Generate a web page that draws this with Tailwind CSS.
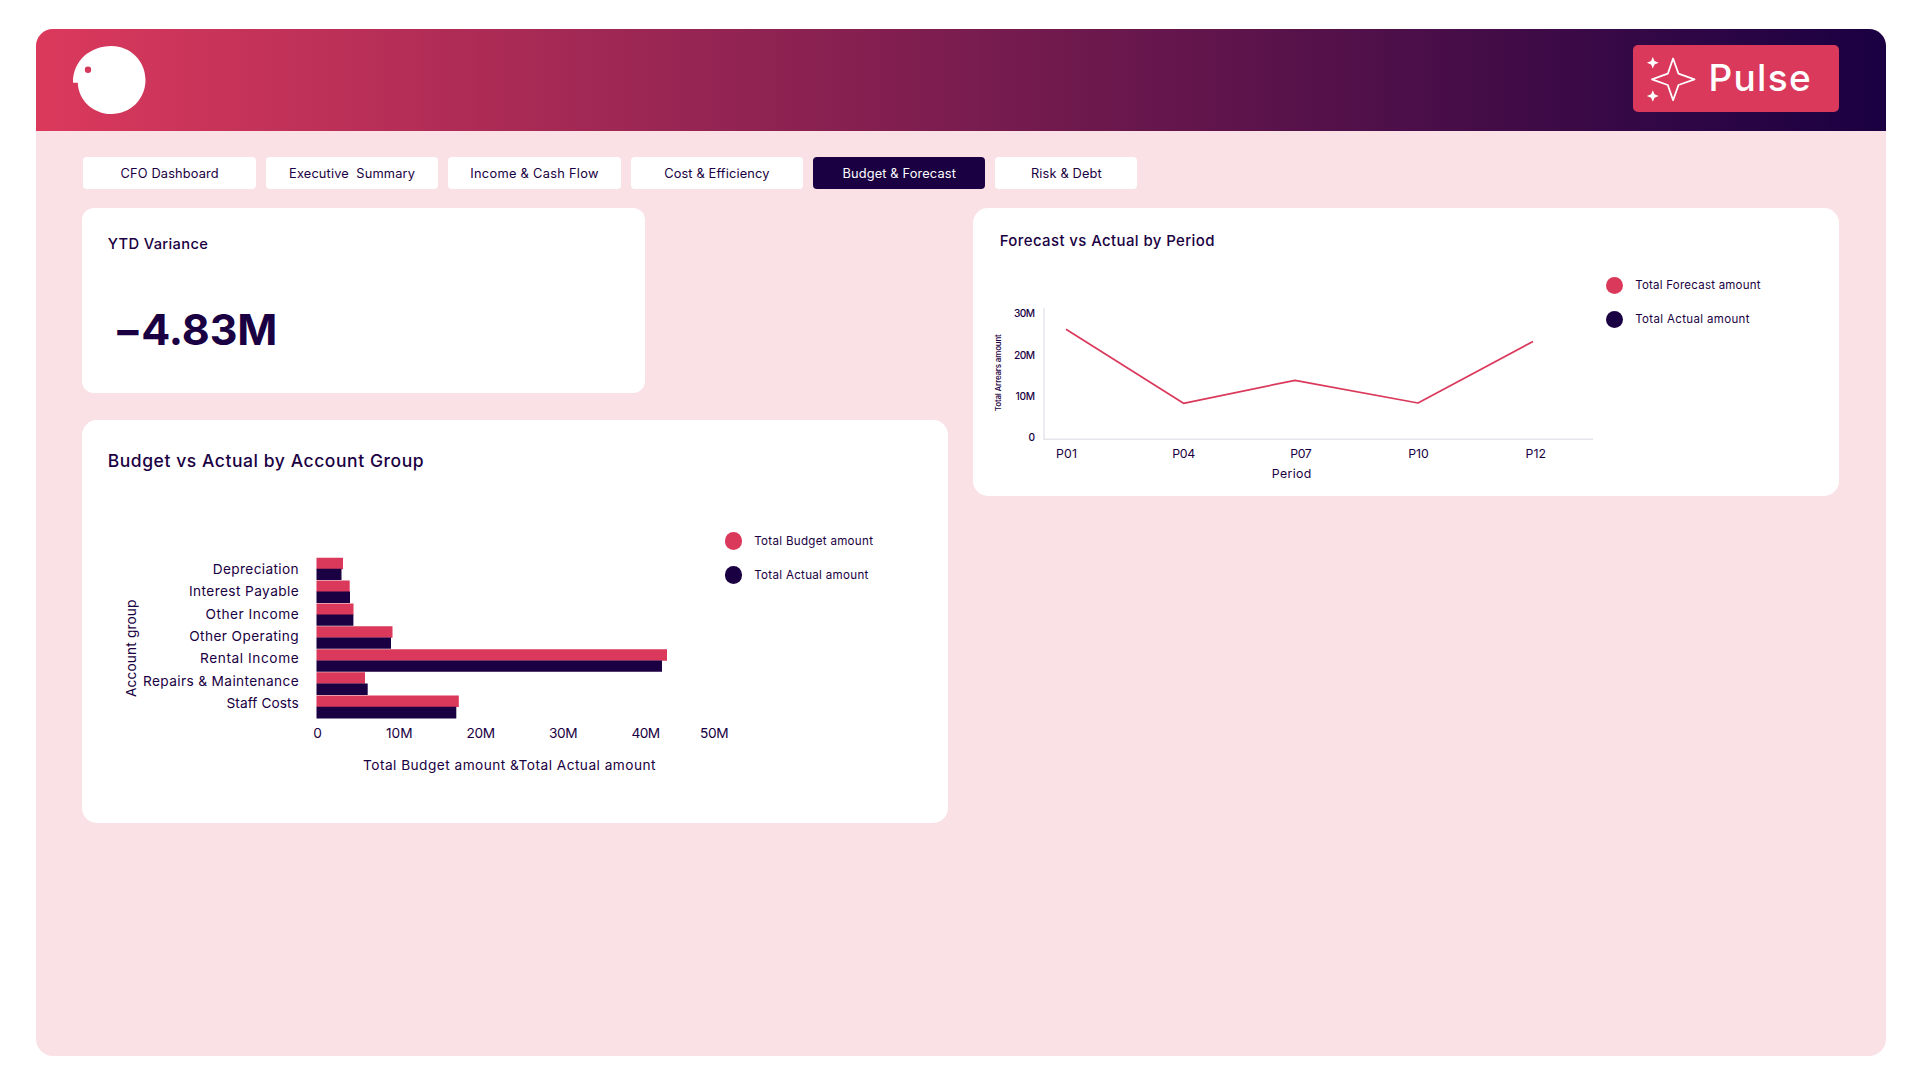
<!DOCTYPE html>
<html lang="en">
<head>
<meta charset="utf-8">
<title>Budget &amp; Forecast</title>
<script src="https://cdn.jsdelivr.net/npm/@tailwindcss/browser@4"></script>
</head>
<body class="h-[1081px] overflow-hidden bg-white pt-[28.5px] pl-[35.700px] font-['Inter',sans-serif] text-[#1a0042]">
<div class="h-[1027.5px] w-[1850.300px] overflow-hidden rounded-[17px] bg-[#fae1e6]">
  <header class="flex h-[102.5px] items-start justify-between bg-linear-to-r/srgb from-[#db395c] to-[#1a0042] pt-[16.5px] pr-[47px] pl-[37px]">
    <svg class="h-[70px] w-[74px]" viewBox="73 45 74 70">
      <path fill="#fff" d="M73 82.7C72.6 62 89 46 111.5 46C130.500 46 145.500 61 145.500 80S130.500 114 111.500 114C93 114 78.200 100 77.800 82.700Z"/>
      <circle cx="88" cy="69.800" r="3.200" fill="#d5385b"/>
    </svg>
    <div class="flex h-[67px] w-[205.500px] items-center rounded-[5px] bg-[#da395b]">
      <svg class="h-[67px] w-[77px] shrink-0" viewBox="1633.5 45 77 67">
        <path fill="none" stroke="#fff" stroke-width="1.800" stroke-linejoin="round" d="M1673.600 58.500L1679 73.700L1695 79.400L1679 85L1673.600 100.200L1668.300 85L1652.500 79.400L1668.300 73.700Z"/>
        <path fill="#fff" d="M1653.300 57L1655 61.100L1659.200 62.800L1655 64.500L1653.300 68.600L1651.600 64.500L1647.400 62.800L1651.600 61.100ZM1653.300 90.200L1655 94.300L1659.200 96L1655 97.700L1653.300 101.800L1651.600 97.700L1647.400 96L1651.600 94.300Z"/>
      </svg>
      <span class="-mt-0.5 -ml-0.5 text-[37px] font-medium tracking-[1.300px] text-white">Pulse</span>
    </div>
  </header>

  <nav class="mt-[26px] ml-[47.800px] flex gap-[10px] text-[12.800px] tracking-[0.150px]">
    <div class="flex h-[31.500px] w-[172.400px] items-center justify-center rounded-[4px] bg-white pt-px">CFO Dashboard</div>
    <div class="flex h-[31.500px] w-[172.400px] items-center justify-center whitespace-pre rounded-[4px] bg-white pt-px">Executive  Summary</div>
    <div class="flex h-[31.500px] w-[172.400px] items-center justify-center rounded-[4px] bg-white pt-px tracking-[0.300px]">Income &amp; Cash Flow</div>
    <div class="flex h-[31.500px] w-[172.400px] items-center justify-center rounded-[4px] bg-white pt-px">Cost &amp; Efficiency</div>
    <div class="flex h-[31.500px] w-[172.400px] items-center justify-center rounded-[4px] bg-[#1a0042] pt-px text-white">Budget &amp; Forecast</div>
    <div class="flex h-[31.500px] w-[142px] items-center justify-center rounded-[4px] bg-white pt-px">Risk &amp; Debt</div>
  </nav>

  <main class="mt-[19.800px] ml-[46px] flex items-start gap-[24.500px]">
    <div class="flex w-[866.500px] flex-col gap-[27px]">
      <section class="h-[184.500px] w-[563px] rounded-[12px] bg-white px-[26px] pt-[26px]">
        <h2 class="text-[14.700px] leading-5 font-medium tracking-[0.350px]">YTD Variance</h2>
        <p class="mt-[44.700px] ml-[9.500px] flex items-center text-[43px] leading-[60px] font-bold"><span class="-ml-1 w-[28px] overflow-visible">−</span><span class="tracking-[-0.100px]">4.83M</span></p>
      </section>

      <section class="h-[403px] rounded-[15px] bg-white px-[26px] pt-[29.200px]">
        <h2 class="text-[17.500px] leading-6 font-medium tracking-[0.560px]">Budget vs Actual by Account Group</h2>
        <div class="mt-[57px] flex">
          <svg class="h-[260px] w-[617px] shrink-0 overflow-visible" viewBox="108 530 617 260">
            <g fill="#da395b">
              <path d="M316.500 557.700H343v11.500H316.500ZM316.500 580.600H349.700v11.500H316.500ZM316.500 603.500H353.500v11.500H316.500ZM316.500 626.300H392.500v11.500H316.500ZM316.500 649.300H667v11.500H316.500ZM316.500 672.300H365v11.500H316.500ZM316.500 695.400H458.800v11.500H316.500Z"/>
            </g>
            <g fill="#1a0042">
              <path d="M316.500 568.700H341.500V580H316.500ZM316.500 591.600H350V603H316.500ZM316.500 614.500H353.400V625.800H316.500ZM316.500 637.400H391V648.800H316.500ZM316.500 660.400H662V671.800H316.500ZM316.500 683.500H367.700V694.900H316.500ZM316.500 706.700H456.300V718.500H316.500Z"/>
            </g>
            <g fill="#1a0042" font-size="13.700">
              <text x="212.700" y="574.300" textLength="86">Depreciation</text>
              <text x="189" y="596.400" textLength="109.700">Interest Payable</text>
              <text x="205.500" y="619" textLength="93.200">Other Income</text>
              <text x="189.200" y="641.300" textLength="109.500">Other Operating</text>
              <text x="200" y="663.400" textLength="98.700">Rental Income</text>
              <text x="143" y="686.200" textLength="155.700">Repairs &amp; Maintenance</text>
              <text x="226.500" y="708.300" textLength="72.200">Staff Costs</text>
              <text x="313.200" y="738.300" textLength="8">0</text>
              <text x="386" y="738.300" textLength="26.500">10M</text>
              <text x="466.500" y="738.300" textLength="28.500">20M</text>
              <text x="549" y="738.300" textLength="28.500">30M</text>
              <text x="631.500" y="738.300" textLength="28.500">40M</text>
              <text x="700" y="738.300" textLength="28.500">50M</text>
              <text x="363" y="770.300" textLength="292.500">Total Budget amount &amp;Total Actual amount</text>
              <text transform="translate(135.700 697) rotate(-90)" textLength="97.500">Account group</text>
            </g>
          </svg>
          <div class="flex flex-col gap-4 pt-0.5 text-[11.600px] leading-[18px]">
            <div class="flex items-center gap-3 tracking-[0.025em]"><span class="size-[17.500px] rounded-full bg-[#da395b]"></span>Total Budget amount</div>
            <div class="flex items-center gap-3 tracking-[0.025em]"><span class="size-[17.500px] rounded-full bg-[#1a0042]"></span>Total Actual amount</div>
          </div>
        </div>
      </section>
    </div>

    <section class="h-[288px] w-[866px] rounded-[15px] bg-white pt-[23px] pl-[25px]">
      <h2 class="ml-[2px] text-[15px] leading-5 font-medium tracking-[0.380px]">Forecast vs Actual by Period</h2>
      <div class="mt-[23.700px] flex">
        <svg class="h-[210px] w-[608px] shrink-0 overflow-visible" viewBox="998 275 608 210">
          <path d="M1044 308V439.300H1593" fill="none" stroke="#e5e3ec" stroke-width="1.400"/>
          <path d="M1066 329.300L1183.500 403.300L1295 380.300L1418 403L1533 341.500" fill="none" stroke="#da395b" stroke-width="1.700" stroke-linejoin="round"/>
          <g fill="#1a0042" font-size="10.200" font-weight="500">
            <text x="1014" y="317.300" textLength="21">30M</text>
            <text x="1014" y="359.300" textLength="21">20M</text>
            <text x="1015.500" y="400.300" textLength="19.500">10M</text>
            <text x="1028.500" y="441.300">0</text>
          </g>
          <g fill="#1a0042" font-size="12.300">
            <text x="1056" y="458" textLength="21">P01</text>
            <text x="1172.300" y="458" textLength="23">P04</text>
            <text x="1290.200" y="458" textLength="21.500">P07</text>
            <text x="1408.200" y="458" textLength="20.500">P10</text>
            <text x="1525.500" y="458" textLength="20.500">P12</text>
            <text x="1271.800" y="478.300" textLength="39.500">Period</text>
          </g>
          <text transform="translate(1001.300 411.200) rotate(-90)" fill="#1a0042" font-size="8" font-weight="500" textLength="77">Total Arrears amount</text>
        </svg>
        <div class="flex flex-col gap-4 pt-[1.500px] text-[11.500px] leading-[18px]">
          <div class="flex items-center gap-3 tracking-[0.02em]"><span class="size-[17.500px] rounded-full bg-[#da395b]"></span>Total Forecast amount</div>
          <div class="flex items-center gap-3 tracking-[0.03em]"><span class="size-[17.500px] rounded-full bg-[#1a0042]"></span>Total Actual amount</div>
        </div>
      </div>
    </section>
  </main>
</div>
</body>
</html>
